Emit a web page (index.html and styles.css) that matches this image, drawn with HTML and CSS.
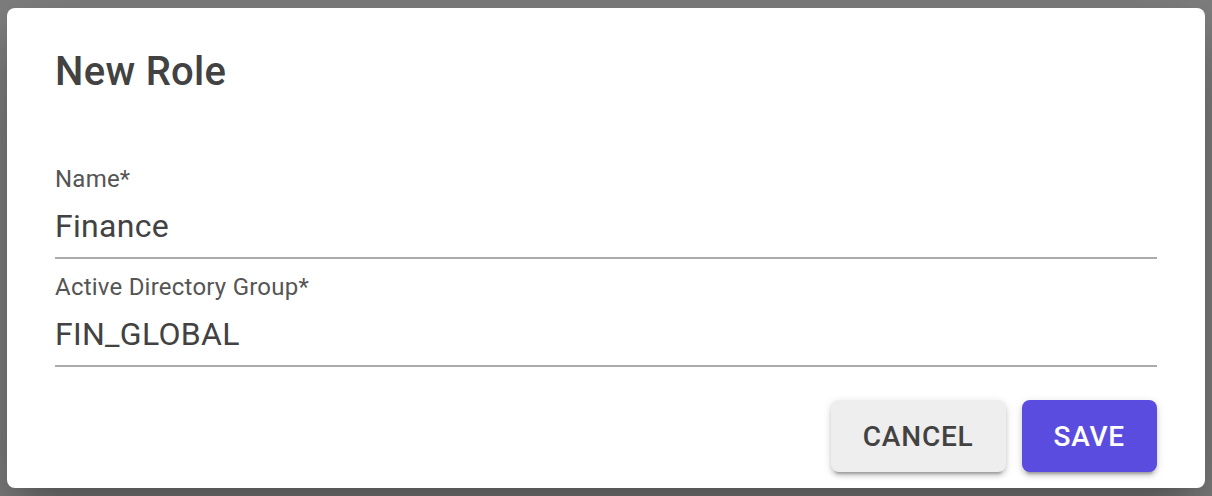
FILE: index.html
```html
<!DOCTYPE html>
<html lang="en">
<head>
<meta charset="utf-8">
<title>New Role</title>
<link rel="stylesheet" href="styles.css">
</head>
<body>
<div class="backdrop">
  <div class="dialog" role="dialog" aria-labelledby="dlg-title">
    <h2 class="dialog-title" id="dlg-title">New Role</h2>
    <div class="dialog-content">
      <div class="field">
        <label class="field-label" for="f-name">Name*</label>
        <input class="field-input" id="f-name" type="text" value="Finance">
      </div>
      <div class="field">
        <label class="field-label" for="f-group">Active Directory Group*</label>
        <input class="field-input" id="f-group" type="text" value="FIN_GLOBAL">
      </div>
    </div>
    <div class="dialog-actions">
      <button class="btn btn-cancel" type="button">Cancel</button>
      <button class="btn btn-save" type="button">Save</button>
    </div>
  </div>
</div>
</body>
</html>
```

FILE: styles.css
```css
* {
  box-sizing: border-box;
}

html, body {
  margin: 0;
  padding: 0;
  width: 1212px;
  height: 496px;
  overflow: hidden;
}

body {
  background: #808080;
  font-family: Roboto, "Liberation Sans", Arial, sans-serif;
}

.backdrop {
  padding: 8px 7px;
  height: 496px;
}

.dialog {
  width: 1198px;
  height: 480px;
  background: #ffffff;
  border-radius: 8px;
  display: flex;
  flex-direction: column;
  box-shadow: 0 22px 30px -14px rgba(0, 0, 0, 0.2),
              0 48px 76px 6px rgba(0, 0, 0, 0.14),
              0 18px 92px 16px rgba(0, 0, 0, 0.12);
}

.dialog-title {
  margin: 0;
  padding: 32px 48px 0;
  font-size: 40px;
  line-height: 64px;
  font-weight: 500;
  letter-spacing: 0.0075em;
  color: #424242;
}

.dialog-content {
  padding: 59px 48px 0;
  display: flex;
  flex-direction: column;
  gap: 12px;
}

.field {
  display: flex;
  flex-direction: column;
}

.field-label {
  font-size: 24px;
  line-height: 32px;
  color: #555555;
  letter-spacing: 0.00938em;
}

.field-input {
  display: block;
  width: 100%;
  margin: 0;
  padding: 0;
  border: 0;
  border-bottom: 2px solid #ababab;
  outline: none;
  background: transparent;
  font-family: inherit;
  font-size: 32px;
  height: 64px;
  line-height: 62px;
  color: #424242;
  letter-spacing: 0.00938em;
}

.dialog-actions {
  margin-top: auto;
  padding: 0 48px 16px;
  display: flex;
  justify-content: flex-end;
  gap: 16px;
}

.btn {
  height: 72px;
  padding: 0 32px;
  border: 0;
  border-radius: 8px;
  font-family: inherit;
  font-size: 28px;
  font-weight: 500;
  letter-spacing: 0.02857em;
  text-transform: uppercase;
  cursor: pointer;
  box-shadow: 0 6px 2px -4px rgba(0, 0, 0, 0.2),
              0 4px 4px 0 rgba(0, 0, 0, 0.14),
              0 2px 10px 0 rgba(0, 0, 0, 0.12);
}

.btn-cancel {
  background: #eeeeee;
  color: #424242;
  min-width: 173px;
}

.btn-save {
  background: #5b4ce0;
  color: #ffffff;
  min-width: 135px;
}
```
